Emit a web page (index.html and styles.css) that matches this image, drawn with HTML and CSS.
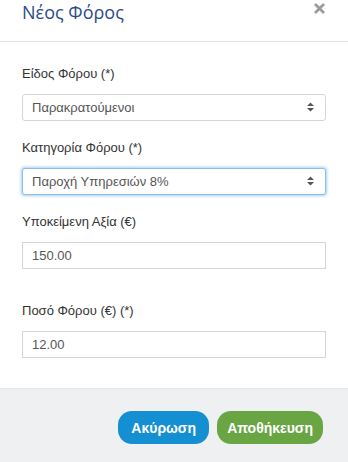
FILE: index.html
```html
<!DOCTYPE html>
<html lang="el">
<head>
    <meta charset="UTF-8">
    <meta name="viewport" content="width=device-width, initial-scale=1.0">
    <title>Νέος Φόρος</title>
    <link rel="stylesheet" href="styles.css">
</head>
<body>
    <div class="modal">
        <div class="modal-header">
            <h4 class="modal-title">Νέος Φόρος</h4>
            <button class="close" type="button">
                <svg width="13" height="11" viewBox="0 0 13 11"><path d="M2 1 L11 10 M11 1 L2 10" stroke="#9b9b9b" stroke-width="2.8" stroke-linecap="butt"/></svg>
            </button>
        </div>

        <div class="modal-body">
            <div class="form-group">
                <label>Είδος Φόρου (*)</label>
                <div class="select-wrap">
                    <select class="form-control">
                        <option>Παρακρατούμενοι</option>
                    </select>
                    <span class="caret-updown"><svg width="7" height="10" viewBox="0 0 7 10"><path d="M3.5 0.5 L7 4 L0 4 Z M0 6 L7 6 L3.5 9.5 Z" fill="#555"/></svg></span>
                </div>
            </div>

            <div class="form-group">
                <label>Κατηγορία Φόρου (*)</label>
                <div class="select-wrap">
                    <select class="form-control focus">
                        <option>Παροχή Υπηρεσιών 8%</option>
                    </select>
                    <span class="caret-updown"><svg width="7" height="10" viewBox="0 0 7 10"><path d="M3.5 0.5 L7 4 L0 4 Z M0 6 L7 6 L3.5 9.5 Z" fill="#555"/></svg></span>
                </div>
            </div>

            <div class="form-group spaced">
                <label>Υποκείμενη Αξία (€)</label>
                <input type="text" class="form-control square" value="150.00">
            </div>

            <div class="form-group last">
                <label>Ποσό Φόρου (€) (*)</label>
                <input type="text" class="form-control square" value="12.00">
            </div>
        </div>

        <div class="modal-footer">
            <button class="btn btn-info" type="button">Ακύρωση</button>
            <button class="btn btn-success" type="button">Αποθήκευση</button>
        </div>
    </div>
</body>
</html>
```

FILE: styles.css
```css
body {
    margin: 0;
    font-family: 'Liberation Sans', Arial, sans-serif;
    background-color: #fff;
    color: #333;
}

.modal {
    width: 348px;
    height: 462px;
    display: flex;
    flex-direction: column;
    overflow: hidden;
}

.modal-header {
    height: 41px;
    border-bottom: 1px solid #e5e5e5;
    display: flex;
    justify-content: space-between;
    padding: 0 22px;
}

.modal-title {
    margin: 0;
    font-family: 'Open Sans', sans-serif;
    font-weight: 400;
    font-size: 18px;
    line-height: 25px;
    color: #2b4b8c;
}

.close {
    background: none;
    border: 0;
    padding: 0;
    margin: 3px 0 0 0;
    height: 11px;
    cursor: pointer;
    display: flex;
}

.modal-body {
    padding: 23px 22px 30px;
}

.form-group {
    margin-bottom: 18px;
}

.form-group.spaced {
    margin-bottom: 33px;
}

.form-group.last {
    margin-bottom: 0;
}

label {
    display: block;
    font-size: 13px;
    line-height: 18px;
    margin-bottom: 11px;
    color: #333;
}

.form-control {
    display: block;
    box-sizing: border-box;
    width: 100%;
    height: 27px;
    padding: 0 9px;
    font-family: 'Liberation Sans', Arial, sans-serif;
    font-size: 13px;
    color: #555;
    background-color: #fff;
    border: 1px solid #d6d6d6;
    border-radius: 3px;
    outline: none;
}

.form-control.square {
    border-radius: 0;
}

select.form-control {
    appearance: none;
    -webkit-appearance: none;
}

.form-control.focus {
    border-color: #8cc0ec;
    box-shadow: 0 0 3px 1px rgba(102, 175, 233, 0.6);
}

.select-wrap {
    position: relative;
}

.caret-updown {
    position: absolute;
    right: 12px;
    top: 8px;
    display: flex;
}

.modal-footer {
    flex: 1;
    border-top: 1px solid #e4e6e7;
    background-color: #eef0f1;
    display: flex;
    justify-content: flex-end;
    align-items: flex-start;
    gap: 8px;
    padding: 22px 25px 0 0;
}

.btn {
    min-width: 91px;
    height: 33px;
    padding: 0 10px;
    border: 0;
    border-radius: 14px;
    font-family: 'Liberation Sans', Arial, sans-serif;
    font-size: 14px;
    font-weight: 700;
    color: #fff;
    cursor: pointer;
}

.btn-info {
    background-color: #138fd2;
}

.btn-success {
    background-color: #69a543;
}
```
